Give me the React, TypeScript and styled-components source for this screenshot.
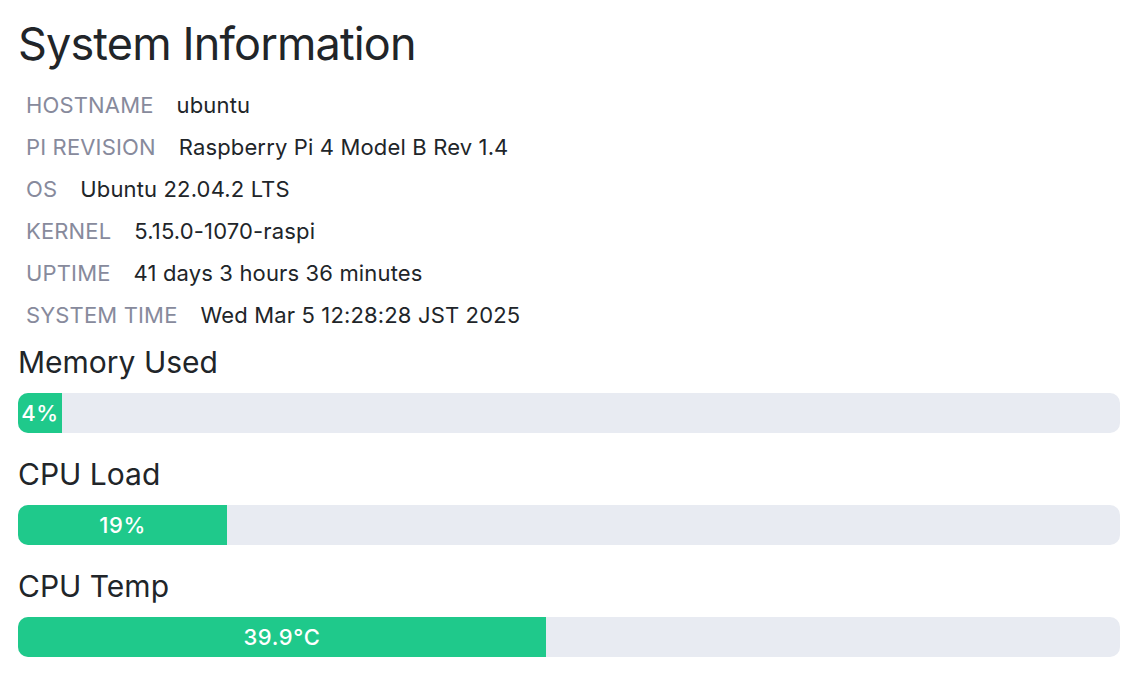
import React from "react";
import styled, { createGlobalStyle } from "styled-components";

const GlobalStyle = createGlobalStyle`
  html, body { margin: 0; padding: 0; background: #ffffff; }
  body { font-family: Inter, "Noto Sans", sans-serif; color: #212529; }
`;

const Page = styled.main`
  padding: 16px 26px 0 18px;
  display: flex;
  flex-direction: column;
`;

const Title = styled.h1`
  margin: 0;
  font-size: 45px;
  font-weight: 400;
  line-height: 56px;
  letter-spacing: -0.85px;
`;

const InfoList = styled.dl`
  margin: 12px 0 0;
  display: flex;
  flex-direction: column;
`;

const InfoRow = styled.div`
  display: flex;
  align-items: baseline;
  gap: 23px;
  padding-left: 8px;
  height: 42px;
  line-height: 42px;
  font-size: 22px;
  letter-spacing: 0.15px;
`;

const Label = styled.dt`
  margin: 0;
  color: #878a9c;
  text-transform: uppercase;
`;

const Value = styled.dd`
  margin: 0;
  color: #212529;
`;

const Section = styled.section<{ $first?: boolean }>`
  display: flex;
  flex-direction: column;
  gap: 13px;
  margin-top: ${(p) => (p.$first ? "8px" : "23px")};
`;

const Heading = styled.h2`
  margin: 0;
  font-size: 30px;
  font-weight: 400;
  line-height: 36px;
`;

const Track = styled.div`
  height: 40px;
  background: #e8ebf2;
  border-radius: 10px;
  overflow: hidden;
  display: flex;
`;

const Fill = styled.div`
  background: #1fc98b;
  color: #ffffff;
  font-size: 22px;
  font-weight: 500;
  letter-spacing: 0.6px;
  display: flex;
  align-items: center;
  justify-content: center;
  white-space: nowrap;
`;

const info: [string, string][] = [
  ["Hostname", "ubuntu"],
  ["Pi Revision", "Raspberry Pi 4 Model B Rev 1.4"],
  ["OS", "Ubuntu 22.04.2 LTS"],
  ["Kernel", "5.15.0-1070-raspi"],
  ["Uptime", "41 days 3 hours 36 minutes"],
  ["System Time", "Wed Mar 5 12:28:28 JST 2025"],
];

const meters = [
  { title: "Memory Used", label: "4%", pct: 4 },
  { title: "CPU Load", label: "19%", pct: 19 },
  { title: "CPU Temp", label: "39.9°C", pct: 47.9 },
];

export default function App() {
  return (
    <>
      <GlobalStyle />
      <Page>
        <Title>System Information</Title>
        <InfoList>
          {info.map(([k, v]) => (
            <InfoRow key={k}>
              <Label>{k}</Label>
              <Value>{v}</Value>
            </InfoRow>
          ))}
        </InfoList>
        {meters.map((m, i) => (
          <Section key={m.title} $first={i === 0}>
            <Heading>{m.title}</Heading>
            <Track>
              <Fill style={{ width: `${m.pct}%` }}>{m.label}</Fill>
            </Track>
          </Section>
        ))}
      </Page>
    </>
  );
}
